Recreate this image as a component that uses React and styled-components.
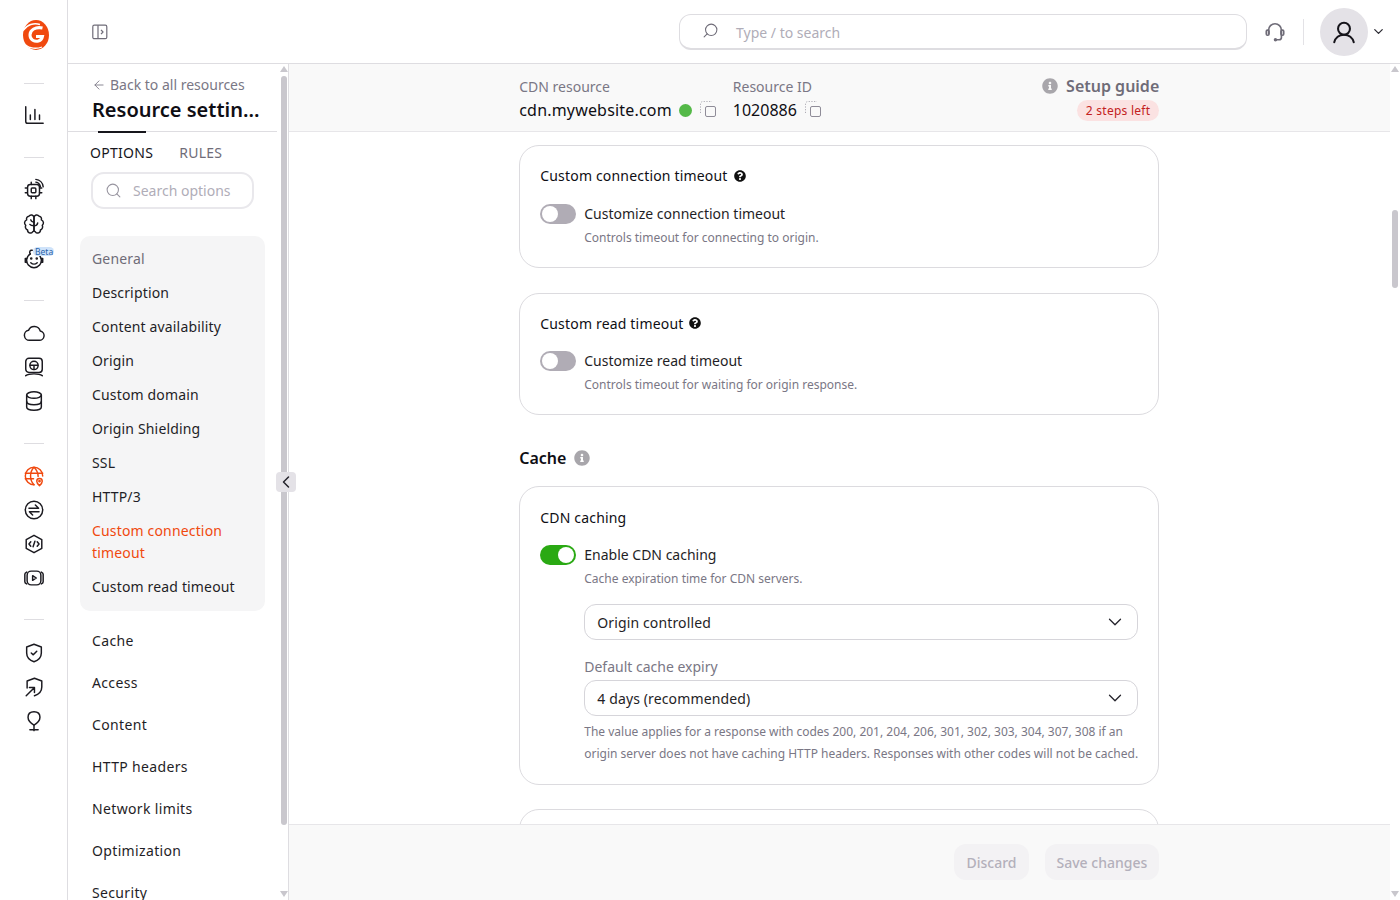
import React from "react";
import styled, { createGlobalStyle } from "styled-components";
import { ChevronDown, ChevronLeft, ArrowLeft, Search } from "lucide-react";
import { FaQuestionCircle, FaInfoCircle } from "react-icons/fa";

const Global = createGlobalStyle`
  html, body { margin: 0; padding: 0; height: 100%; overflow: hidden; background: #fff; }
  #root { height: 100vh; }
  * { box-sizing: border-box; }
  body { font-family: "Noto Sans", "Open Sans", sans-serif; color: #111; font-size: 14px; }
`;

const Page = styled.div`display: flex; height: 100vh; overflow: hidden;`;
const Rail = styled.nav`
  width: 68px; flex: none; border-right: 1px solid #dedde1;
  display: flex; flex-direction: column; align-items: center; padding-left: 1px;
`;
const RailLogo = styled.div`height: 70px; flex: none; display: flex; align-items: center; justify-content: center; padding-left: 3px;`;
const RailDivider = styled.div`width: 20px; height: 1px; flex: none; background: #dedde1; margin: ${p => p.$m};`;
const RailGroup = styled.div`display: flex; flex-direction: column; gap: ${p => p.$gap || 10}px; align-items: center; flex: none;`;
const RailIcon = styled.div`
  position: relative; width: 24px; height: 24px; color: ${p => p.$active ? "#f0490f" : "#1b1a20"};
  display: flex; align-items: center; justify-content: center;
  svg { display: block; }
`;
const Beta = styled.span`
  position: absolute; left: 11px; top: 0; height: 9px; padding: 0 1px 0 2px; border-radius: 5px;
  background: #cfe3fa; color: #2a62a8; font-size: 8.5px; line-height: 9px;
`;

const Right = styled.div`flex: 1; min-width: 0; display: flex; flex-direction: column;`;
const TopBar = styled.header`
  height: 64px; flex: none; border-bottom: 1px solid #dedde1; display: flex; align-items: center;
  padding: 0 14px 0 24px;
`;
const PanelToggle = styled.div`color: #6f6c78; display: flex; width: 16px; flex: none;`;
const GlobalSearch = styled.div`
  width: 568px; height: 36px; flex: none; margin-left: 571px; border: 1px solid #dedde1; border-bottom-width: 2px; border-radius: 12px;
  display: flex; align-items: center; padding: 2px 0 0 22px; color: #b0adb8; font-size: 14px; background: #fff;
`;
const FlipSearch = styled(Search)`transform: scaleX(-1); color: #6f6c78; margin: -3px 17px 0 0; flex: none;`;
const Headset = styled.div`margin-left: 17px; color: #6f6c78; display: flex; flex: none;`;
const VBar = styled.div`width: 1px; height: 26px; flex: none; background: #e3e2e6; margin: 0 16px 0 17px;`;
const Avatar = styled.div`
  width: 48px; height: 48px; flex: none; border-radius: 50%; background: #e4e2e7; display: flex; align-items: center; justify-content: center; color: #15141a;
`;
const AvatarCaret = styled(ChevronDown)`margin-left: 3px; color: #2c2b33; flex: none;`;

const Body = styled.div`flex: 1; min-height: 0; display: flex;`;
const Sidebar = styled.aside`
  position: relative; width: 221px; flex: none; border-right: 1px solid #dedde1; display: flex;
`;
const SideInner = styled.div`flex: 1; min-width: 0; overflow: hidden; display: flex; flex-direction: column;`;
const SideHead = styled.div`height: 68px; flex: none; padding: 11px 0 0 24px; border-bottom: 1px solid #dedde1; position: relative; margin-right: 2px;`;
const BackLink = styled.div`display: flex; align-items: center; gap: 4px; color: #7a7785; font-size: 14px; line-height: 20px; height: 20px;`;
const BackArrow = styled(ArrowLeft)`flex: none; color: #7a7785;`;
const Title = styled.div`font-size: 20px; font-weight: 600; line-height: 30px; color: #0f0e14; white-space: nowrap;`;
const TabMark = styled.div`position: absolute; left: 30px; bottom: -2px; width: 48px; height: 2px; background: #17161c;`;
const Tabs = styled.div`display: flex; flex: none; gap: 26px; padding: 10px 0 0 22px; font-size: 14px; line-height: 22px; letter-spacing: .28px;`;
const Tab = styled.span`color: ${p => p.$active ? "#17161c" : "#6f6c78"};`;
const SideSearch = styled.div`
  flex: none; margin: 8px 0 0 23px; width: 163px; height: 37px; border: 2px solid #e9e8ec; border-radius: 13px; background: #fff;
  display: flex; align-items: center; padding-left: 12px; gap: 11px; color: #b0adb8; font-size: 14px;
`;
const SideSearchIcon = styled(Search)`color: #97949f; flex: none;`;
const GroupPanel = styled.div`
  flex: none; margin: 27px 0 0 12px; width: 185px; padding: 6px 0 7px; background: #f5f5f6; border-radius: 10px;
`;
const NavItem = styled.div`
  padding: 6px 12px; font-size: 14px; line-height: 22px; letter-spacing: .16px;
  color: ${p => p.$active ? "#f0490f" : p.$muted ? "#6f6c78" : "#1f1e26"};
`;
const NavTop = styled.div`
  height: 42px; display: flex; align-items: center; padding-left: 24px; font-size: 14px; letter-spacing: .35px; color: #1f1e26; flex: none;
`;
const NavList = styled.div`margin-top: 8px; flex: none; display: flex; flex-direction: column;`;

const Track = styled.div`
  width: ${p => p.$w}px; flex: none; display: flex; flex-direction: column; align-items: center; padding: 2px 0 3px;
  background: ${p => p.$bg || "transparent"};
`;
const ArrowUp = styled.div`
  flex: none; width: 0; height: 0; border-left: 4px solid transparent; border-right: 4px solid transparent;
  border-bottom: 6px solid #c9c7cd;
`;
const ArrowDown = styled(ArrowUp)`border-bottom: 0; border-top: 6px solid #c9c7cd; margin-top: auto;`;
const Thumb = styled.div`width: 6px; border-radius: 3px; background: #c9c7cd; margin-top: ${p => p.$top}px; height: ${p => p.$h}px; flex: none;`;
const Collapse = styled.button`
  position: absolute; left: 208px; top: 408px; width: 20px; height: 20px; border: 0; padding: 0; border-radius: 4px;
  background: #e4e2e7; display: flex; align-items: center; justify-content: center; color: #24232b;
`;

const Main = styled.main`flex: 1; min-width: 0; display: flex; flex-direction: column;`;
const MainHead = styled.div`
  height: 68px; flex: none; background: #f9f9f9; border-bottom: 1px solid #e7e6e9; display: flex; justify-content: center; padding-right: .5px;
`;
const HeadInner = styled.div`width: 640px; display: flex; padding-top: 12px;`;
const Meta = styled.div`margin-left: ${p => p.$ml || 0}px;`;
const MetaLabel = styled.div`color: #7a7785; font-size: 14px; line-height: 22px;`;
const MetaValue = styled.div`display: flex; align-items: center; font-size: 16px; line-height: 24px; color: #0f0e14; letter-spacing: ${p => p.$spaced ? ".18px" : "0"};`;
const StatusDot = styled.span`width: 13px; height: 13px; border-radius: 50%; background: #54b948; margin: 0 8px 0 7px;`;
const CopyBtn = styled.svg`display: block; flex: none; color: #8f8c98; margin: -2px 0 0 ${p => p.$ml || 0}px;`;
const Guide = styled.div`margin-left: auto; display: flex; flex-direction: column; align-items: flex-end; margin-top: -1px;`;
const GuideTitle = styled.div`display: flex; align-items: center; gap: 8px; font-size: 16px; font-weight: 600; line-height: 22px; color: #6f6c78;`;
const GuideInfo = styled(FaInfoCircle)`color: #a8a6ab; font-size: 16px;`;
const Badge = styled.span`
  margin-top: 3px; height: 21px; border-radius: 11px; background: #fbe2e2; color: #c32121; font-size: 12px; letter-spacing: .25px; line-height: 21px; padding: 0 9px;
`;
const Scroll = styled.div`flex: 1; min-height: 0; overflow: hidden; display: flex; flex-direction: column; align-items: center; padding: 13px .5px 0 0;`;
const Card = styled.section`
  width: 640px; flex: none; border: 1px solid #dcdbdf; border-radius: 20px; padding: ${p => p.$pt ?? 19}px 20px 19px;
  margin-bottom: ${p => p.$mb ?? 25}px;
  ${p => p.$h ? `height: ${p.$h}px;` : ""}
`;
const CardTitle = styled.div`display: flex; align-items: center; gap: 6px; font-size: 14px; letter-spacing: .18px; line-height: 22px; color: #0f0e14;`;
const HelpIcon = styled(FaQuestionCircle)`font-size: 12px; color: #111; margin-top: -1px;`;
const ToggleRow = styled.div`display: flex; align-items: center; gap: 8px; margin-top: 15.5px; height: 22px;`;
const Toggle = styled.span`
  width: 36px; height: 20px; border-radius: 10px; padding: 2px; flex: none; display: flex;
  background: ${p => p.$on ? "#2aa913" : "#b0acb5"}; justify-content: ${p => p.$on ? "flex-end" : "flex-start"};
`;
const Knob = styled.span`width: 16px; height: 16px; border-radius: 50%; background: #fff;`;
const ToggleLabel = styled.span`font-size: 14px; line-height: 22px; color: #1f1e26;`;
const Hint = styled.div`margin: 3px 0 0 44px; font-size: 12px; line-height: 20px; color: #7a7785;`;
const Section = styled.div`display: flex; align-items: center; gap: 8px; font-size: 16px; font-weight: 600; line-height: 24px; color: #0f0e14; width: 640px; margin: 5.5px 0 16px; flex: none;`;
const SectionInfo = styled(FaInfoCircle)`color: #a8a6ab; font-size: 16px;`;
const Select = styled.div`
  margin: ${p => p.$mt}px 0 0 44px; height: 36px; border: 1px solid #d6d5da; border-radius: 12px; padding: 0 11px 0 12px;
  display: flex; align-items: center; justify-content: space-between; font-size: 14px; letter-spacing: .13px; color: #1f1e26;
`;
const SelectCaret = styled(ChevronDown)`color: #24232b; flex: none; margin-top: -1px;`;
const FieldLabel = styled.div`margin: 16px 0 2px 44px; font-size: 14px; line-height: 22px; color: #7a7785;`;
const Help = styled.div`margin: 5px 0 0 44px; font-size: 12px; line-height: 22px; color: #7a7785;`;
const Footer = styled.footer`
  height: 76px; flex: none; background: #f9f9f9; border-top: 1px solid #e7e6e9; display: flex; justify-content: center; padding: 19px .5px 0 0;
`;
const FooterInner = styled.div`width: 640px; display: flex; justify-content: flex-end; gap: 16px;`;
const Ghost = styled.button`
  height: 36px; border: 0; border-radius: 12px; background: #f3f2f4; color: #b3b0bb; font: 500 14px "Noto Sans", sans-serif; padding: 0 12px;
`;

const S = ({ children, size = 22, w = 1.6, vb = "0 0 24 24" }) => (
  <svg width={size} height={size} viewBox={vb} fill="none" stroke="currentColor" strokeWidth={w} strokeLinecap="round" strokeLinejoin="round">{children}</svg>
);

const Logo = () => (
  <svg width="28" height="30" viewBox="0 0 28 30" fill="none" stroke="#fff">
    <ellipse cx="14" cy="15" rx="13" ry="15" fill="#f0490f" stroke="none" />
    <path strokeWidth="1.4" d="M1 10.500C5 4.500 12 2.500 18 4.500" />
    <path strokeWidth="3" d="M20.500 8C13.500 6.500 8 10 8 15c0 5 4.500 7 8.500 6 2-.5 3.500-2 4-4.500H14" />
    <path strokeWidth="1.3" d="M3.500 25c4 3.500 11 4.200 16.500 2" />
  </svg>
);

const I = {
  chart: <S><path d="M3 3v16a2 2 0 0 0 2 2h17"/><path d="M8 17v-5M13 17V6M18 17v-5"/></S>,
  chip: <S><rect x="5" y="7" width="13" height="13" rx="3"/><rect x="9" y="11" width="5" height="5" rx="1"/><path d="M2.500 11h2M2.500 16h2M9 20v2.500M14 20v2.500M18 11h2.500M18 16h2.500M9 4.500V7"/><path d="M14 4.500a6 6 0 0 1 5 5M14 1.500a9 9 0 0 1 8 8"/></S>,
  brain: <S><path d="M12 5a3 3 0 0 0-5.500-1.500A3 3 0 0 0 4 7.500a3.500 3.500 0 0 0-1 6 3.500 3.500 0 0 0 2 5 3 3 0 0 0 5.500 2 2 2 0 0 0 1.500-1.500z"/><path d="M12 5a3 3 0 0 1 5.500-1.500A3 3 0 0 1 20 7.500a3.500 3.500 0 0 1 1 6 3.500 3.500 0 0 1-2 5 3 3 0 0 1-5.500 2A2 2 0 0 1 12 19z"/><path d="M12 10c-2 0-3-1-3.500-2.500M12 14c2 0 3.500-.8 4-3M12 14c-2 0-3.500 0-4.500-1.500"/></S>,
  bot: <S><path d="M16 6.500a8 8 0 1 1-8 0"/><path d="M8 6.500C6.500 4.500 7.500 2 10 2.500"/><path d="M4 11.500H2.500v4H4M20 11.500h1.500v4H20"/><path d="M8.500 16c2 2 5 2 7 0"/><circle cx="9" cy="11.500" r=".6" fill="currentColor"/><circle cx="15" cy="11.500" r=".6" fill="currentColor"/></S>,
  cloud: <S><path d="M17.500 20H7a5.500 5.500 0 0 1-1-10.900A6.800 6.800 0 0 1 18.800 9.900 5.100 5.100 0 0 1 17.500 20z"/></S>,
  monitor: <S><rect x="3" y="2.500" width="18" height="15.500" rx="3.500"/><circle cx="12" cy="10.300" r="4.500"/><path d="M7.800 10h8.400M12 10.300V14.800M3 21.500c2-1.500 4.500-2 9-2s7 .5 9 2"/></S>,
  db: <S><ellipse cx="12" cy="5.500" rx="8" ry="3.500"/><path d="M4 5.500v13c0 2 3.500 3.500 8 3.500s8-1.500 8-3.500v-13"/><path d="M4 12.500c0 2 3.500 3.500 8 3.500s8-1.500 8-3.500"/></S>,
  globe: <S><path d="M12 21.500a9.500 9.500 0 1 1 9.500-9.500"/><path d="M2.500 9h19M2.500 15h9"/><path d="M12 2.500c-5 5-5 14 0 19M12 2.500c3 3 4.500 6.500 4.500 10"/><path d="M18 22.500s-3-2.600-3-4.800a3 3 0 0 1 6 0c0 2.200-3 4.800-3 4.800z" fill="#fff"/><circle cx="18" cy="17.700" r=".7" fill="currentColor"/></S>,
  swap: <S><circle cx="12" cy="12" r="9.500"/><path d="M6.500 10H17l-3.500-3.500M17.500 14H7l3.500 3.500"/></S>,
  code: <S><path d="M12 2.500l8.500 4.800v9.400L12 21.500l-8.500-4.800V7.300z"/><path d="M8.500 9.500L6.500 12l2 2.500M15.500 9.500l2 2.500-2 2.500M13 9l-2 6"/></S>,
  play: <S><rect x="4.500" y="4.500" width="15" height="15" rx="4.500"/><path d="M2 8v8M22 8v8M4 5.500c-1 .5-2 1.500-2 2.500M4 18.500c-1-.5-2-1.500-2-2.500M20 5.500c1 .5 2 1.500 2 2.500M20 18.500c1-.5 2-1.500 2-2.500"/><path d="M10.500 9.500l4 2.500-4 2.500z"/></S>,
  shield: <S><path d="M12 2.500l8 3v6.500c0 5-3.500 8-8 9.500-4.500-1.500-8-4.500-8-9.500V5.500z"/><path d="M9 12l2.200 2 3.800-4"/></S>,
  shieldGo: <S><path d="M4.500 13V5.500l8-3 8 3V12c0 5-3.500 8-8 9.500"/><path d="M3.500 21.500L12 13M7 12.500h5.500V18"/></S>,
  pin: <S><path d="M12 2c-4 0-6.500 2.500-6.500 6 0 3.500 3 6.500 6.500 8.500 3.500-2 6.500-5 6.500-8.500 0-3.500-2.500-6-6.500-6z"/><path d="M12 16.500v6M7.500 21.500h9"/></S>,
};

const Copy = ({ ml }) => (
  <CopyBtn $ml={ml} width="16" height="16" viewBox="0 0 16 16" fill="none" stroke="currentColor">
    <path d="M.5 12V3A2.500 2.500 0 0 1 3 .5h9" strokeDasharray="1.200 1.500" opacity=".7" />
    <rect x="5.500" y="5.500" width="10" height="10" rx="1.500" />
  </CopyBtn>
);

const Scrollbar = ({ w, top, h, bg }) => (
  <Track $w={w} $bg={bg}>
    <ArrowUp />
    <Thumb $top={top} $h={h} />
    <ArrowDown />
  </Track>
);

const groupItems = ["Description", "Content availability", "Origin", "Custom domain", "Origin Shielding", "SSL", "HTTP/3"];
const topItems = ["Cache", "Access", "Content", "HTTP headers", "Network limits", "Optimization", "Security"];

export default function App() {
  return (
    <Page>
      <Global />
      <Rail>
        <RailLogo><Logo /></RailLogo>
        <RailDivider $m="13px 0 19px" />
        <RailGroup>
          <RailIcon>{I.chart}</RailIcon>
        </RailGroup>
        <RailDivider $m="30px 0 19px" />
        <RailGroup $gap={11}>
          <RailIcon>{I.chip}</RailIcon>
          <RailIcon>{I.brain}</RailIcon>
          <RailIcon>{I.bot}<Beta>Beta</Beta></RailIcon>
        </RailGroup>
        <RailDivider $m="29px 0 20px" />
        <RailGroup>
          <RailIcon>{I.cloud}</RailIcon>
          <RailIcon>{I.monitor}</RailIcon>
          <RailIcon>{I.db}</RailIcon>
        </RailGroup>
        <RailDivider $m="30px 0 20px" />
        <RailGroup>
          <RailIcon $active>{I.globe}</RailIcon>
          <RailIcon>{I.swap}</RailIcon>
          <RailIcon>{I.code}</RailIcon>
          <RailIcon>{I.play}</RailIcon>
        </RailGroup>
        <RailDivider $m="29px 0 21px" />
        <RailGroup>
          <RailIcon>{I.shield}</RailIcon>
          <RailIcon>{I.shieldGo}</RailIcon>
          <RailIcon>{I.pin}</RailIcon>
        </RailGroup>
      </Rail>
      <Right>
        <TopBar>
          <PanelToggle>
            <svg width="16" height="16" viewBox="0 0 16 16" fill="none" stroke="currentColor" strokeWidth="1.2" strokeLinejoin="round"><rect x=".8" y="1.2" width="14" height="13.5" rx="1.5" /><path d="M6 1.200v13.500M9 5.800L11 8l-2 2.200" /></svg>
          </PanelToggle>
          <GlobalSearch><FlipSearch size={17} strokeWidth={1.5} />Type / to search</GlobalSearch>
          <Headset>
            <S size={22} w={1.8}><path d="M5 14V10a7 7 0 0 1 14 0v8a2.500 2.500 0 0 1-2.500 2.500H13"/><rect x="2.500" y="10" width="3" height="5.500" rx="1.300"/><rect x="18.500" y="10" width="3" height="5.500" rx="1.300"/><circle cx="12.500" cy="20.500" r="1" fill="currentColor"/></S>
          </Headset>
          <VBar />
          <Avatar>
            <S size={26} w={1.9}><circle cx="12" cy="9" r="5.500"/><path d="M3 21.500c1-4 4.500-7 9-7s8 3 9 7"/></S>
          </Avatar>
          <AvatarCaret size={15} />
        </TopBar>
        <Body>
          <Sidebar>
            <SideInner>
              <SideHead>
                <BackLink><BackArrow size={14} strokeWidth={1.5} />Back to all resources</BackLink>
                <Title>Resource settin...</Title>
                <TabMark />
              </SideHead>
              <Tabs><Tab $active>OPTIONS</Tab><Tab>RULES</Tab></Tabs>
              <SideSearch><SideSearchIcon size={17} strokeWidth={1.5} />Search options</SideSearch>
              <GroupPanel>
                <NavItem $muted>General</NavItem>
                {groupItems.map(t => <NavItem key={t}>{t}</NavItem>)}
                <NavItem $active>Custom connection timeout</NavItem>
                <NavItem>Custom read timeout</NavItem>
              </GroupPanel>
              <NavList>
                {topItems.map(t => <NavTop key={t}>{t}</NavTop>)}
              </NavList>
            </SideInner>
            <Scrollbar w={9} top={4} h={749} />
            <Collapse aria-label="Collapse"><ChevronLeft size={20} strokeWidth={1.8} /></Collapse>
          </Sidebar>
          <Main>
            <MainHead>
              <HeadInner>
                <Meta>
                  <MetaLabel>CDN resource</MetaLabel>
                  <MetaValue $spaced>cdn.mywebsite.com<StatusDot /><Copy /></MetaValue>
                </Meta>
                <Meta $ml={17}>
                  <MetaLabel>Resource ID</MetaLabel>
                  <MetaValue>1020886<Copy ml={8} /></MetaValue>
                </Meta>
                <Guide>
                  <GuideTitle><GuideInfo />Setup guide</GuideTitle>
                  <Badge>2 steps left</Badge>
                </Guide>
              </HeadInner>
            </MainHead>
            <Scroll>
              <Card>
                <CardTitle>Custom connection timeout<HelpIcon /></CardTitle>
                <ToggleRow><Toggle><Knob /></Toggle><ToggleLabel>Customize connection timeout</ToggleLabel></ToggleRow>
                <Hint>Controls timeout for connecting to origin.</Hint>
              </Card>
              <Card>
                <CardTitle>Custom read timeout<HelpIcon /></CardTitle>
                <ToggleRow><Toggle><Knob /></Toggle><ToggleLabel>Customize read timeout</ToggleLabel></ToggleRow>
                <Hint>Controls timeout for waiting for origin response.</Hint>
              </Card>
              <Section>Cache<SectionInfo /></Section>
              <Card $mb={24} $pt={20}>
                <CardTitle>CDN caching</CardTitle>
                <ToggleRow><Toggle $on><Knob /></Toggle><ToggleLabel>Enable CDN caching</ToggleLabel></ToggleRow>
                <Hint>Cache expiration time for CDN servers.</Hint>
                <Select $mt={15}>Origin controlled<SelectCaret size={22} strokeWidth={1.4} /></Select>
                <FieldLabel>Default cache expiry</FieldLabel>
                <Select $mt={0}>4 days (recommended)<SelectCaret size={22} strokeWidth={1.4} /></Select>
                <Help>The value applies for a response with codes 200, 201, 204, 206, 301, 302, 303, 304, 307, 308 if an origin server does not have caching HTTP headers. Responses with other codes will not be cached.</Help>
              </Card>
              <Card $mb={0} $h={120} />
            </Scroll>
            <Footer>
              <FooterInner>
                <Ghost>Discard</Ghost>
                <Ghost>Save changes</Ghost>
              </FooterInner>
            </Footer>
          </Main>
          <Scrollbar w={10} top={138} h={78} bg="#fff" />
        </Body>
      </Right>
    </Page>
  );
}
